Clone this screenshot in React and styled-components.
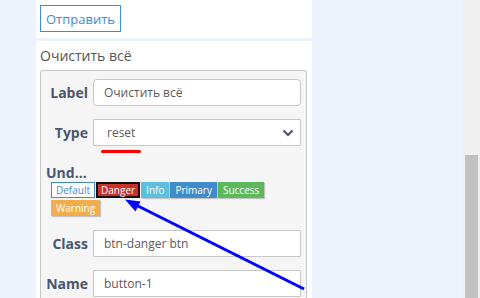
import React from "react";
import styled, { createGlobalStyle } from "styled-components";

const GlobalStyle = createGlobalStyle`
    html, body {
        margin: 0;
        padding: 0;
        background: #eef2fa;
        font-family: "Open Sans", "Liberation Sans", sans-serif;
    }
`

const Pagina = styled.div`
    position: relative;
    display: flex;
    width: 480px;
    height: 298px;
    overflow: hidden;
    background: #eef2fa;
`

const Coluna = styled.div`
    margin-left: 36px;
    width: 276px;
    display: flex;
    flex-direction: column;
    gap: 3px;
`

const Espaco = styled.div`
    flex: 1;
`

const BarraRolagem = styled.div`
    width: 17px;
    background: #f0f0f0;
    display: flex;
    flex-direction: column;
    align-items: center;
    padding-top: 155px;
    box-sizing: border-box;
`

const Polegar = styled.div`
    width: 13px;
    flex: 1;
    background: #c1c1c1;
`

const Painel = styled.div`
    background: #ffffff;
    padding: ${(p) => p.$padding || "6px 4px"};
    box-sizing: border-box;
    height: ${(p) => p.$altura || "auto"};
    flex: ${(p) => (p.$cresce ? 1 : "none")};
`

const Botao = styled.button`
    display: block;
    height: 27px;
    width: 81px;
    border: 1px solid #428bca;
    background: #ffffff;
    color: #428bca;
    font-family: "Open Sans", "Liberation Sans", sans-serif;
    font-size: 13px;
    padding: 0;
    border-radius: 0;
`

const Titulo = styled.div`
    font-size: 14px;
    line-height: 18px;
    color: #555555;
    margin-bottom: 5px;
`

const Caixa = styled.div`
    border: 1px solid #c8c8c8;
    border-bottom: none;
    border-radius: 3px 3px 0 0;
    background: #f5f5f5;
    width: 267px;
    box-sizing: border-box;
    padding: 8px 5px 20px 0;
`

const Linha = styled.div`
    position: relative;
    display: grid;
    grid-template-columns: 47px 208px;
    column-gap: 5px;
    align-items: center;
    margin-bottom: ${(p) => p.$baixo || "13px"};
`

const Rotulo = styled.label`
    text-align: right;
    font-size: 14px;
    font-weight: 700;
    color: #4b566e;
`

const Campo = styled.div`
    height: 27px;
    box-sizing: border-box;
    border: 1px solid #c8c8c8;
    border-radius: ${(p) => (p.$redondo ? "4px" : "1px")};
    background: #ffffff;
    display: flex;
    align-items: center;
    justify-content: space-between;
    padding: 0 6px 0 ${(p) => p.$recuo || "10px"};
    font-size: 12px;
    color: #5a5a5a;
`

const Sublinhado = styled.div`
    position: absolute;
    left: 60px;
    top: 31px;
    width: 40px;
    height: 3px;
    border-radius: 2px;
    background: #ff0000;
`

const Secao = styled.div`
    font-size: 14px;
    font-weight: 700;
    color: #4b566e;
    line-height: 19px;
    padding-left: 5px;
    margin-top: 17px;
`

const Etiquetas = styled.div`
    display: flex;
    flex-wrap: wrap;
    row-gap: 2px;
    column-gap: 1px;
    padding-left: 10px;
    width: 250px;
    margin-bottom: 14px;
`

const cores = {
    default: { fundo: "#ffffff", texto: "#428bca", borda: "#428bca" },
    danger: { fundo: "#c9302c", texto: "#ffffff", borda: "#111111" },
    info: { fundo: "#5bc0de", texto: "#ffffff", borda: "#5bc0de" },
    primary: { fundo: "#428bca", texto: "#ffffff", borda: "#428bca" },
    success: { fundo: "#5cb85c", texto: "#ffffff", borda: "#5cb85c" },
    warning: { fundo: "#f0ad4e", texto: "#ffffff", borda: "#f0ad4e" },
}

const Etiqueta = styled.span`
    height: 16px;
    line-height: ${(p) => (p.$tipo === "danger" ? "12px" : "14px")};
    box-sizing: border-box;
    padding: 0 ${(p) => (p.$tipo === "danger" ? "3px" : "4px")};
    font-size: 10px;
    background: ${(p) => cores[p.$tipo].fundo};
    color: ${(p) => cores[p.$tipo].texto};
    border: ${(p) => (p.$tipo === "danger" ? "2px" : "1px")} solid ${(p) => cores[p.$tipo].borda};
    box-shadow: ${(p) => (p.$tipo === "default" || p.$tipo === "danger" ? "none" : "1px 1px 1px rgba(0,0,0,0.2)")};
`

const Seta = styled.svg`
    position: absolute;
    left: 0;
    top: 0;
    pointer-events: none;
`

function Chevron() {
    return (
        <svg width="12" height="8" viewBox="0 0 12 8">
            <path d="M1.5 1.5 L6 6 L10.5 1.5" fill="none" stroke="#4b566e" strokeWidth="2.2" />
        </svg>
    )
}

export default function App() {
    const lista = ["default", "danger", "info", "primary", "success", "warning"]
    const nomes = {
        default: "Default",
        danger: "Danger",
        info: "Info",
        primary: "Primary",
        success: "Success",
        warning: "Warning",
    }

    return (
        <Pagina>
            <GlobalStyle />
            <Coluna>
                <Painel $altura="38px" $padding="5px 4px">
                    <Botao>Отправить</Botao>
                </Painel>
                <Painel $cresce $padding="6px 0 0 4px">
                    <Titulo>Очистить всё</Titulo>
                    <Caixa>
                        <Linha>
                            <Rotulo>Label</Rotulo>
                            <Campo $redondo>Очистить всё</Campo>
                        </Linha>
                        <Linha $baixo="0">
                            <Rotulo>Type</Rotulo>
                            <Campo $recuo="13px">
                                reset
                                <Chevron />
                            </Campo>
                            <Sublinhado />
                        </Linha>
                        <Secao>Und...</Secao>
                        <Etiquetas>
                            {lista.map((t) => (
                                <Etiqueta key={t} $tipo={t}>{nomes[t]}</Etiqueta>
                            ))}
                        </Etiquetas>
                        <Linha>
                            <Rotulo>Class</Rotulo>
                            <Campo>btn-danger btn</Campo>
                        </Linha>
                        <Linha>
                            <Rotulo>Name</Rotulo>
                            <Campo>button-1</Campo>
                        </Linha>
                    </Caixa>
                </Painel>
            </Coluna>
            <Espaco />
            <BarraRolagem>
                <Polegar />
            </BarraRolagem>
            <Seta width="480" height="298" viewBox="0 0 480 298">
                <line x1="304" y1="289" x2="134" y2="204" stroke="#0000ff" strokeWidth="3" />
                <polygon points="125,199.5 140.5,201.5 135.5,211.5" fill="#0000ff" />
            </Seta>
        </Pagina>
    )
}
